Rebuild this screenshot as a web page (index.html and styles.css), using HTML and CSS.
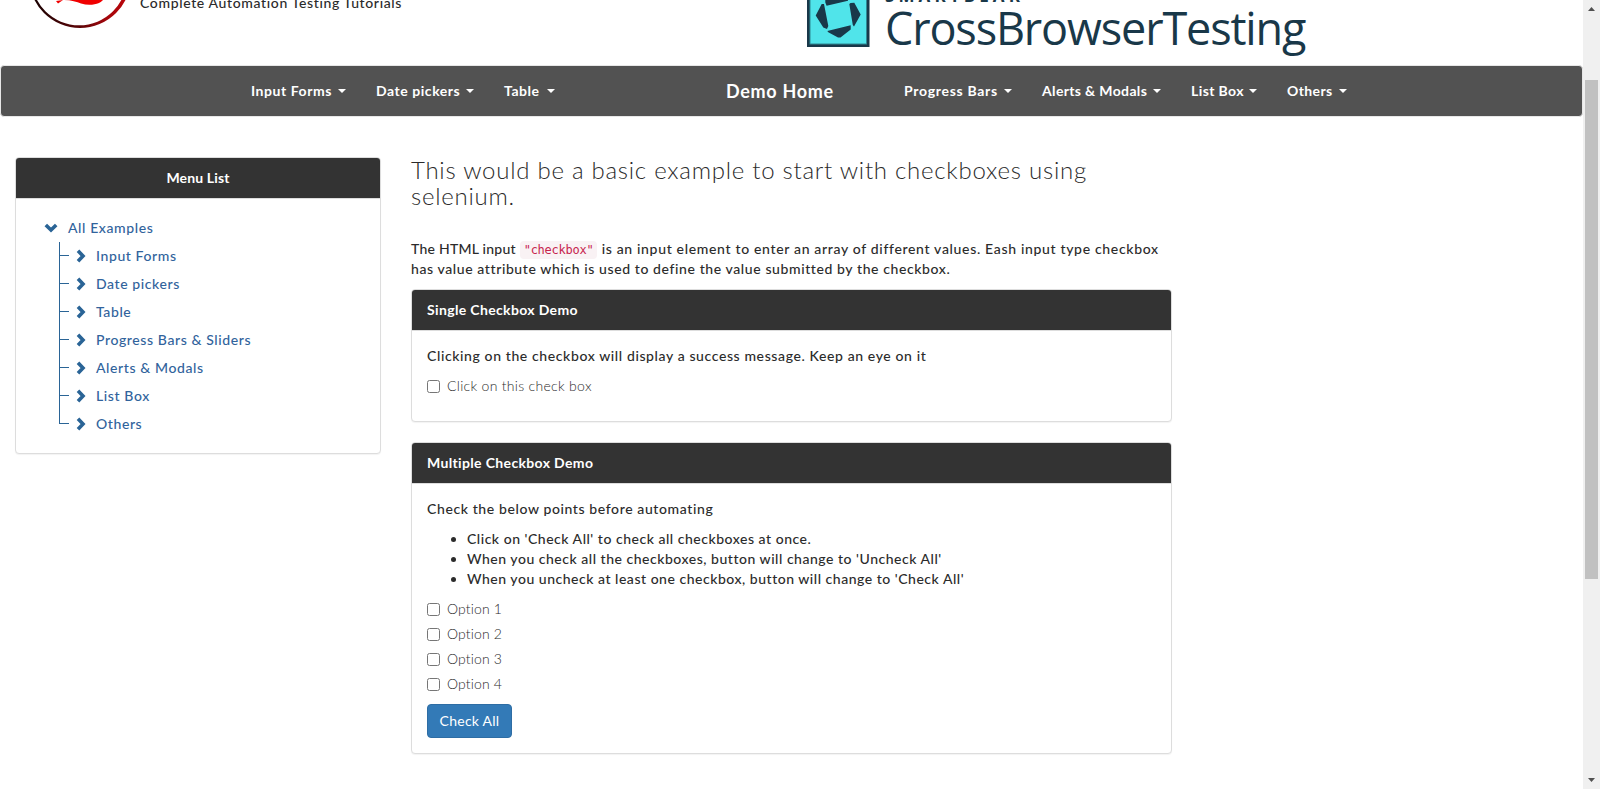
FILE: index.html
```html
<!DOCTYPE html>
<html lang="en">
<head>
<meta charset="utf-8">
<title>Checkbox Demo</title>
<link rel="stylesheet" href="styles.css">
</head>
<body>
<div class="viewport">
<div class="page">
<header class="header">
  <div class="brand">
    <svg class="brand-logo" width="110" height="30" viewBox="0 0 110 30">
      <defs><linearGradient id="ring" gradientUnits="userSpaceOnUse" x1="0" x2="110" y1="0" y2="0"><stop offset="0.1" stop-color="#1c0202"/><stop offset="0.5" stop-color="#5d0407"/><stop offset="0.75" stop-color="#a5060b"/><stop offset="1" stop-color="#c2050b"/></linearGradient></defs>
      <path fill="url(#ring)" fill-rule="evenodd" d="M4 -23a51 51 0 1 0 102 0a51 51 0 1 0 -102 0ZM6.400 -22.500a47.800 47.800 0 1 0 95.600 0a47.800 47.800 0 1 0 -95.600 0Z"/>
      <path fill="#f00000" d="M31 1L33 3.500L38 0ZM39 0C46 0 52 2 56 3.500C62 5.500 69 5.200 74 3C76 2 77 1 78 0Z"/>
    </svg>
    <span class="tagline">Complete Automation Testing Tutorials</span>
  </div>
  <div class="sponsor">
    <svg class="sponsor-logo" width="63" height="47" viewBox="0 0 63 47">
      <path fill="#193849" d="M0 0H62.500V47H0Z"/><path fill="#2f8893" d="M2.500 0H60V44.500H2.500Z"/><path fill="#50e4ea" d="M3.500 0H59V43.500H3.500Z"/>
      <path fill="#193849" d="M18.300 0V2.500L19.600 5.700L41 0.700V0ZM14.700 4L17 4L21.300 26L20 29L16.300 27.500L8.700 15.500ZM42.300 4L43.500 3L47.300 2.700L53.700 14.500L47 26.500L45.800 25ZM20.300 31L43.700 25.300V29.500L33.500 37.500H31L21.300 32.300Z"/>
    </svg>
    <div class="sponsor-text"><span class="sponsor-top">SMARTBEAR</span><span class="sponsor-name">CrossBrowserTesting</span></div>
  </div>
</header>
<nav class="navbar">
  <a class="nav-link nav-forms">Input Forms</a>
  <a class="nav-link nav-dates">Date pickers</a>
  <a class="nav-link nav-table">Table</a>
  <a class="nav-home">Demo Home</a>
  <a class="nav-link nav-progress">Progress Bars</a>
  <a class="nav-link nav-alerts">Alerts &amp; Modals</a>
  <a class="nav-link nav-list">List Box</a>
  <a class="nav-link nav-others">Others</a>
</nav>
<div class="columns">
  <aside class="panel sidebar">
    <div class="panel-heading centered">Menu List</div>
    <div class="tree">
      <div class="tree-root"><svg width="14" height="10" viewBox="0 0 14 10"><path d="M1.800 2L7 7.100L12.200 2"/></svg><a>All Examples</a></div>
      <ul class="tree-list">
        <li><svg width="10" height="14" viewBox="0 0 10 14"><path d="M2 1.800L7 7L2 12.200"/></svg><a>Input Forms</a></li>
        <li><svg width="10" height="14" viewBox="0 0 10 14"><path d="M2 1.800L7 7L2 12.200"/></svg><a>Date pickers</a></li>
        <li><svg width="10" height="14" viewBox="0 0 10 14"><path d="M2 1.800L7 7L2 12.200"/></svg><a>Table</a></li>
        <li><svg width="10" height="14" viewBox="0 0 10 14"><path d="M2 1.800L7 7L2 12.200"/></svg><a>Progress Bars &amp; Sliders</a></li>
        <li><svg width="10" height="14" viewBox="0 0 10 14"><path d="M2 1.800L7 7L2 12.200"/></svg><a>Alerts &amp; Modals</a></li>
        <li><svg width="10" height="14" viewBox="0 0 10 14"><path d="M2 1.800L7 7L2 12.200"/></svg><a>List Box</a></li>
        <li><svg width="10" height="14" viewBox="0 0 10 14"><path d="M2 1.800L7 7L2 12.200"/></svg><a>Others</a></li>
      </ul>
    </div>
  </aside>
  <main class="main">
    <h1 class="title">This would be a basic example to start with checkboxes using<br>selenium.</h1>
    <p class="intro"><span class="intro-lead">The HTML input </span><code>"checkbox"</code> is an input element to enter an array of different values. Eash input type checkbox<br><span class="intro-end">has value attribute which is used to define the value submitted by the checkbox.</span></p>
    <section class="panel single">
      <div class="panel-heading">Single Checkbox Demo</div>
      <div class="panel-body">
        <p class="text">Clicking on the checkbox will display a success message. Keep an eye on it</p>
        <label class="check"><input type="checkbox"><span>Click on this check box</span></label>
      </div>
    </section>
    <section class="panel multiple">
      <div class="panel-heading">Multiple Checkbox Demo</div>
      <div class="panel-body">
        <p class="text">Check the below points before automating</p>
        <ul class="points">
          <li>Click on 'Check All' to check all checkboxes at once.</li>
          <li>When you check all the checkboxes, button will change to 'Uncheck All'</li>
          <li>When you uncheck at least one checkbox, button will change to 'Check All'</li>
        </ul>
        <label class="check option"><input type="checkbox"><span>Option 1</span></label>
        <label class="check option"><input type="checkbox"><span>Option 2</span></label>
        <label class="check option"><input type="checkbox"><span>Option 3</span></label>
        <label class="check option"><input type="checkbox"><span>Option 4</span></label>
        <button class="btn">Check All</button>
      </div>
    </section>
  </main>
</div>
</div>
<div class="scrollbar">
  <svg width="7" height="4" viewBox="0 0 7 4"><path d="M0 4L3.500 0L7 4Z"/></svg>
  <div class="thumb"></div>
  <svg width="7" height="4" viewBox="0 0 7 4"><path d="M0 0L3.500 4L7 0Z"/></svg>
</div>
</div>
</body>
</html>
```
FILE: styles.css
```css
* { box-sizing: border-box; }
body { margin: 0; background: #fff; color: #2b2b2b; font: 500 14px/20px Lato, "Open Sans", sans-serif; letter-spacing: 0.61px; overflow: hidden; }
.viewport { display: flex; height: 789px; }
.page { width: 1583px; overflow: hidden; }
.header { display: flex; height: 65px; overflow: hidden; }
.brand { display: flex; width: 807px; padding-left: 25px; }
.brand-logo { display: block; }
.tagline { margin: -7px 0 0 5px; letter-spacing: 0.64px; }
.sponsor { display: flex; color: #193849; }
.sponsor-logo { display: block; }
.sponsor-text { display: flex; flex-direction: column; margin-left: 15px; font-family: "Open Sans", sans-serif; font-weight: 400; white-space: nowrap; }
.sponsor-top { margin-top: -13px; height: 18px; font-size: 17px; line-height: 18px; font-weight: 700; letter-spacing: 4.100px; }
.sponsor-name { margin-top: -2px; font-size: 45px; line-height: 50px; letter-spacing: -1.150px; }
.navbar { display: flex; height: 52px; padding-left: 235px; background: #525252; border: 1px solid #e7e7e7; border-radius: 4px; color: #fff; font-weight: 700; line-height: 50px; white-space: nowrap; }
.nav-link { display: flex; align-items: center; justify-content: space-between; padding-left: 15px; margin-right: 15px; letter-spacing: 0.55px; }
.nav-link::after { content: ""; border: 4px solid transparent; border-top-color: #fff; border-bottom: 0; }
.nav-forms { width: 110px; }
.nav-dates { width: 113px; }
.nav-table { width: 66px; }
.nav-home { width: 319px; padding-left: 156px; font-size: 18px; letter-spacing: 0.7px; }
.nav-progress { width: 123px; letter-spacing: 0.7px; }
.nav-alerts { width: 134px; letter-spacing: 0.35px; }
.nav-list { width: 81px; letter-spacing: 0.4px; }
.nav-others { width: 75px; letter-spacing: 0.4px; }
.columns { display: flex; align-items: flex-start; padding: 40px 15px 0; gap: 30px; }
.panel { background: #fff; border: 1px solid #ddd; border-radius: 4px; box-shadow: 0 1px 1px rgba(0,0,0,.05); }
.panel-heading { height: 41px; padding: 10px 15px; background: #333; color: #fff; border-bottom: 1px solid #ddd; border-radius: 3px 3px 0 0; font-weight: 700; letter-spacing: 0.35px; }
.centered { text-align: center; letter-spacing: 0.15px; }
.sidebar { width: 366px; height: 297px; }
.tree { padding: 15px; color: #31639c; letter-spacing: 0.6px; }
.tree svg { fill: none; stroke: #2a6496; stroke-width: 3.600; }
.tree-root { display: flex; align-items: center; height: 28px; padding-left: 13px; gap: 10px; }
.tree-list { list-style: none; margin: 0 0 0 28px; padding: 0; }
.tree-list li { display: flex; align-items: center; height: 28px; gap: 10px; background: linear-gradient(#2a6496, #2a6496) 0 0 / 1px 100% no-repeat, linear-gradient(#2a6496, #2a6496) 0 13px / 10px 1px no-repeat; padding-left: 17px; }
.tree-list li:last-child { background-size: 1px 14px, 10px 1px; }
.main { width: 761px; white-space: nowrap; }
.title { margin: 0 0 29px; font-size: 24px; line-height: 26.400px; font-weight: 300; letter-spacing: 0.74px; }
.intro { margin: 0 0 10px; letter-spacing: 0.67px; }
.intro-lead { letter-spacing: 0.25px; }
.intro-end { letter-spacing: 0.6px; }
code { padding: 2px 4px; color: #c7254e; background: #f9f2f4; border-radius: 4px; font: 400 12px/16px "DejaVu Sans Mono", monospace; letter-spacing: -0.25px; }
.panel-body { padding: 15px; }
.single { height: 133px; margin-bottom: 20px; }
.multiple { height: 312px; }
.text { margin: 0 0 10px; }
.check { display: flex; align-items: center; height: 20px; margin-bottom: 5px; font-weight: 300; letter-spacing: 0.3px; }
.check input { width: 13px; height: 13px; margin: 1px 7px 0 0; }
.option { letter-spacing: 0.15px; }
.points { margin: 0 0 10px; padding-left: 40px; letter-spacing: 0.52px; }
.btn { display: block; width: 85px; height: 34px; margin-top: 10px; padding: 0; border: 1px solid #2e6da4; border-radius: 4px; background: #337ab7; color: #fff; font: inherit; font-weight: 400; letter-spacing: 0.25px; }
.scrollbar { display: flex; flex-direction: column; align-items: center; width: 17px; padding: 7px 0; background: #f0f0f0; fill: #505050; }
.thumb { width: 13px; height: 499px; margin: 69px 0 auto; background: #c1c1c1; }
```
